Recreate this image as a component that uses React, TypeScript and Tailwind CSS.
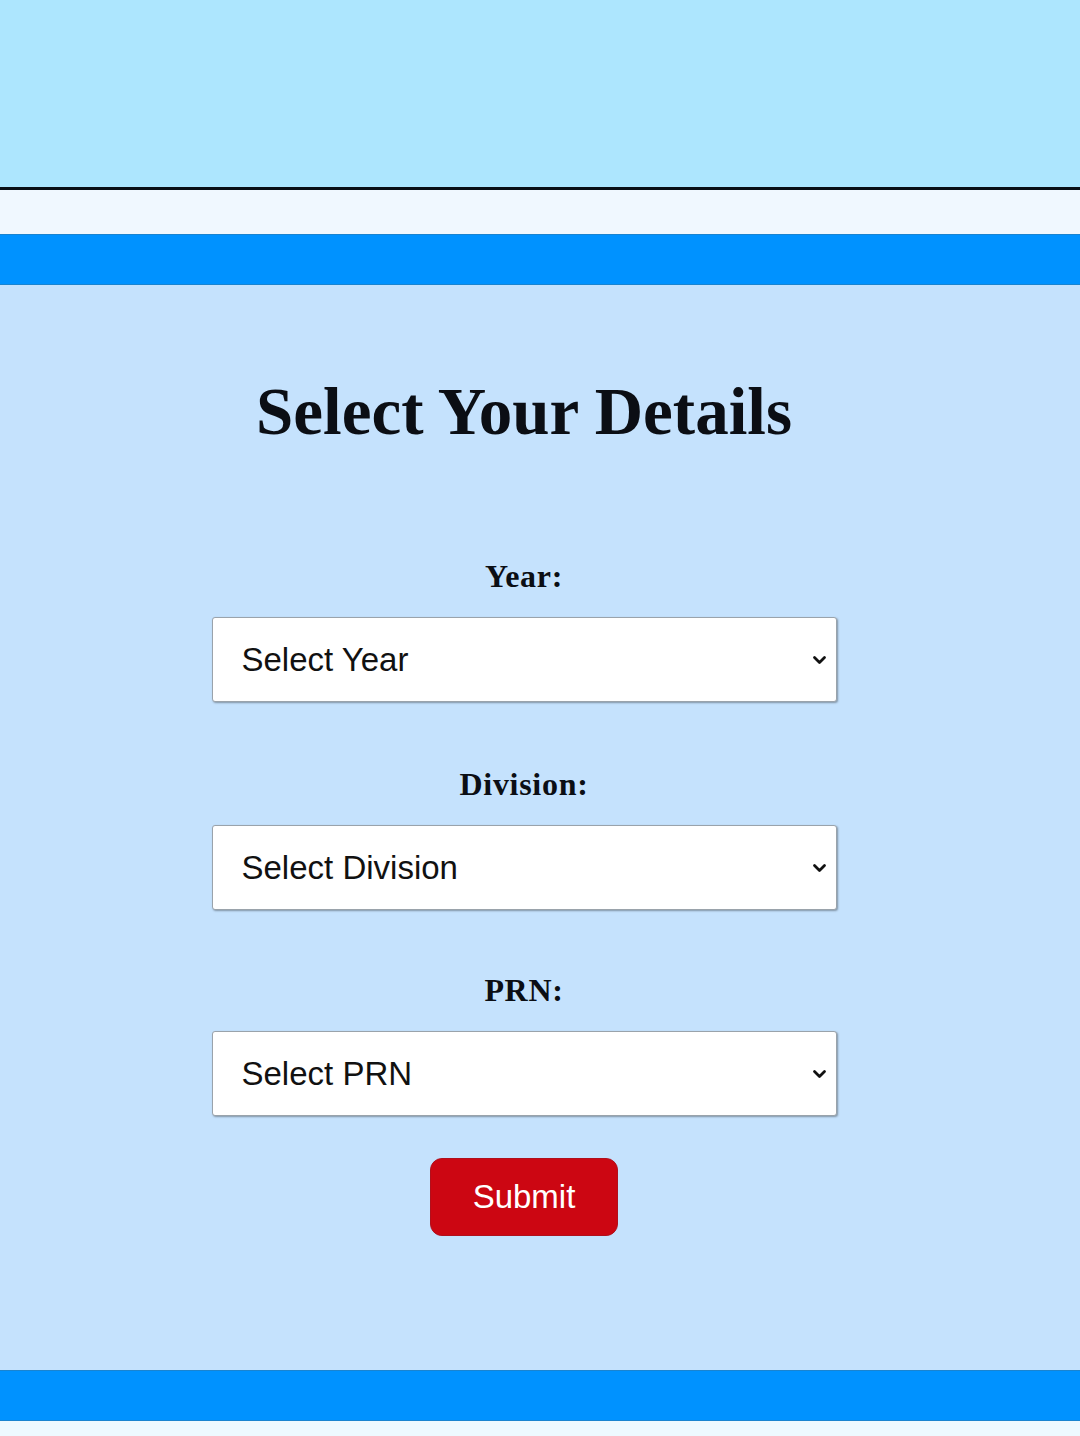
import React from "react";

const FIELDS = [
  { label: "Year:", placeholder: "Select Year", gap: "" },
  { label: "Division:", placeholder: "Select Division", gap: "mt-[66px]" },
  { label: "PRN:", placeholder: "Select PRN", gap: "mt-[64px]" },
];

function Chevron() {
  return (
    <svg width="15" height="11" viewBox="0 0 15 11" className="pointer-events-none absolute right-[10px] top-1/2 -translate-y-1/2">
      <path d="M2.5 3 L7.5 8 L12.5 3" fill="none" stroke="#111" strokeWidth="2.8" strokeLinecap="round" strokeLinejoin="round" />
    </svg>
  );
}

export default function App() {
  return (
    <div className="w-[1080px] min-h-[1436px] bg-[#f0f8ff]" style={{ fontFamily: "'Liberation Sans', Arial, sans-serif" }}>
      {/* top banner */}
      <div className="h-[190px] bg-[#ade6fe] border-b-[3px] border-[#0a0f16]" />
      <div className="h-[44px] bg-[#f0f8ff]" />
      <div className="h-[51px] bg-[#0092ff] border-y border-[#1a84d0]" />

      {/* form */}
      <main className="h-[1085px] bg-[#c5e2fd] flex flex-col items-center pt-[93px] pr-[32px]">
        <h1
          className="text-[67px] leading-none font-bold text-[#0b0e14]"
          style={{ fontFamily: "'Liberation Serif', 'Times New Roman', serif" }}
        >
          Select Your Details
        </h1>

        <form className="flex flex-col items-center mt-[115px]" onSubmit={(e) => e.preventDefault()}>
          {FIELDS.map((f) => (
            <div key={f.label} className={`flex flex-col items-center ${f.gap}`}>
              <label
                className="text-[32px] leading-none font-bold tracking-[0.7px] text-[#0b0e14]"
                style={{ fontFamily: "'Liberation Serif', 'Times New Roman', serif" }}
              >
                {f.label}
              </label>
              <div className="relative mt-[25px] w-[625px]">
                <select
                  defaultValue=""
                  className="appearance-none w-full h-[85px] bg-white border border-[#9aa3ab] rounded-[3px] pl-[29px] pr-10 text-[33px] text-[#111] shadow-[1px_1px_2px_rgba(0,0,0,0.35)] outline-none"
                  style={{ fontFamily: "'Liberation Sans', Arial, sans-serif" }}
                >
                  <option value="">{f.placeholder}</option>
                </select>
                <Chevron />
              </div>
            </div>
          ))}

          <button
            type="submit"
            className="mt-[42px] w-[188px] h-[78px] rounded-[12px] bg-[#cc0612] text-white text-[33px] border border-[#b0101c]"
          >
            Submit
          </button>
        </form>
      </main>

      <div className="h-[51px] bg-[#0092ff] border-y border-[#1a84d0]" />
      <div className="h-[15px] bg-[#eef9ff]" />
    </div>
  );
}
